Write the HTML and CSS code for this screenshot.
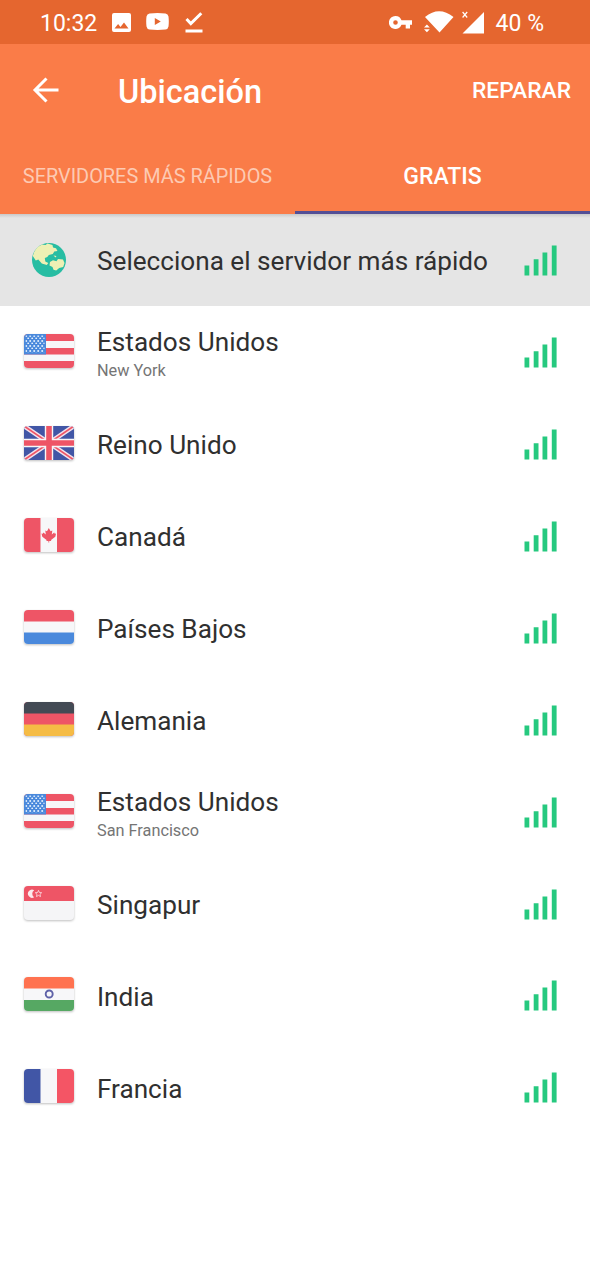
FILE: index.html
```html
<!DOCTYPE html>
<html lang="es">
<head>
<meta charset="utf-8">
<title>Ubicación</title>
<link rel="stylesheet" href="styles.css">
</head>
<body>
<svg class="defs" width="0" height="0" aria-hidden="true">
  <defs>
    <clipPath id="flag-clip"><rect width="50" height="34" rx="4"/></clipPath>
    <pattern id="stars" width="4" height="5" patternUnits="userSpaceOnUse">
      <circle cx="2.2" cy="2" r="1" fill="#e3effc"/><circle cx="0.2" cy="4.5" r=".9" fill="#e3effc"/><circle cx="4.2" cy="4.5" r=".9" fill="#e3effc"/>
    </pattern>
    <symbol id="bars" viewBox="0 0 33 31">
      <path fill="#26c97f" d="M.5 20.500h4.800v10H.5zM9.700 14.300h4.800v16.200H9.700zM18.500 7.500h4.800v23h-4.800zM27.800.5h4.800v30h-4.800z"/>
    </symbol>
    <symbol id="us" viewBox="0 0 50 34"><g clip-path="url(#flag-clip)">
      <path fill="#f7f7f9" d="M0 0h50v34H0z"/><path fill="#ee5566" d="M0 0h50v7H0zM0 14h50v6.500H0zM0 27h50v7H0z"/>
      <path fill="#4a89dc" d="M0 0h22v20.500H0z"/><path fill="url(#stars)" d="M1.500 1.500h19v17h-19z"/>
    </g></symbol>
    <symbol id="gb" viewBox="0 0 50 34"><g clip-path="url(#flag-clip)">
      <path fill="#4156a6" d="M0 0h50v34H0z"/>
      <path stroke="#f3e0ea" stroke-width="4.600" d="M0 0l50 34M50 0L0 34"/>
      <path stroke="#ee5566" stroke-width="1.700" d="M0 0l50 34M50 0L0 34"/>
      <path stroke="#f7f7f9" stroke-width="8.400" d="M25 0v34M0 17h50"/>
      <path stroke="#ee5566" stroke-width="5.600" d="M25 0v34M0 17h50"/>
    </g></symbol>
    <symbol id="ca" viewBox="0 0 50 34"><g clip-path="url(#flag-clip)">
      <path fill="#f7f7f9" d="M0 0h50v34H0z"/><path fill="#ee5566" d="M0 0h16.500v34H0zM33 0h17v34H33z"/>
      <path fill="#ee5566" d="M24.800 10l1.800 3.200 1.700-.8-.5 4 2.400-1.800.6 1.200 1.300-.2-.8 3.200-4.300 3.200.2 1h-2v1.500h-.8V23h-2l.2-1-4.300-3.200-.8-3.200 1.300.2.600-1.200 2.400 1.800-.5-4 1.700.8z"/>
    </g></symbol>
    <symbol id="nl" viewBox="0 0 50 34"><g clip-path="url(#flag-clip)">
      <path fill="#f7f7f9" d="M0 0h50v34H0z"/><path fill="#ee5566" d="M0 0h50v11.500H0z"/><path fill="#4a89dc" d="M0 22.500h50V34H0z"/>
    </g></symbol>
    <symbol id="de" viewBox="0 0 50 34"><g clip-path="url(#flag-clip)">
      <path fill="#ee5566" d="M0 0h50v34H0z"/><path fill="#434a54" d="M0 0h50v11.500H0z"/><path fill="#f5bc45" d="M0 22.500h50V34H0z"/>
    </g></symbol>
    <symbol id="sg" viewBox="0 0 50 34"><g clip-path="url(#flag-clip)">
      <path fill="#f5f5f7" d="M0 0h50v34H0z"/><path fill="#ee5566" d="M0 0h50v15H0z"/>
      <path fill="#fbeaed" d="M10.200 4.200A4.100 4.100 0 1 0 10.200 11.200 4.100 4.100 0 0 1 10.200 4.200z"/>
      <path fill="none" stroke="#f9d5db" stroke-width=".9" d="M14.500 4.400l.9 2.100 2.300.2-1.700 1.600.5 2.300-2-1.200-2 1.200.5-2.300-1.700-1.600 2.300-.2z"/>
    </g></symbol>
    <symbol id="in" viewBox="0 0 50 34"><g clip-path="url(#flag-clip)">
      <path fill="#f7f7f9" d="M0 0h50v34H0z"/><path fill="#ff7250" d="M0 0h50v11.500H0z"/><path fill="#56a863" d="M0 23h50v11H0z"/>
      <circle cx="25.200" cy="17" r="3.500" fill="none" stroke="#5f62a8" stroke-width="1.900"/>
    </g></symbol>
    <symbol id="fr" viewBox="0 0 50 34"><g clip-path="url(#flag-clip)">
      <path fill="#f7f7f9" d="M0 0h50v34H0z"/><path fill="#4156a6" d="M0 0h16.500v34H0z"/><path fill="#f45565" d="M33 0h17v34H33z"/>
    </g></symbol>
  </defs>
</svg>

<header class="header">
  <div class="status">
    <span class="time">10:32</span>
    <svg class="ic-image" viewBox="0 0 19 19" width="19" height="19"><path fill="#fff" fill-rule="evenodd" d="M2 0h15a2 2 0 0 1 2 2v15a2 2 0 0 1-2 2H2a2 2 0 0 1-2-2V2a2 2 0 0 1 2-2zM2.500 15.500h14l-4.500-6-3.500 4.400-2.400-2.800z"/></svg>
    <svg class="ic-video" viewBox="0 0 23 17" width="23" height="17"><path fill="#fff" fill-rule="evenodd" d="M3.500.4Q11.500-.4 19.500.4 22 .6 22.500 3.500q.6 5 0 10-.5 2.700-3 3-8 .8-16 0-2.500-.3-3-3-.6-5 0-10Q1 .6 3.500.4zM8.800 5v7l6-3.500z"/></svg>
    <svg class="ic-check" viewBox="0 0 18 21" width="18" height="21"><path fill="none" stroke="#fff" stroke-width="3" d="M1.500 7l4.300 4.500L16.300 1.200M.5 19h17"/></svg>
    <div class="status-right">
      <svg class="ic-key" viewBox="0 0 23 13" width="23" height="13"><path fill="#fff" fill-rule="evenodd" d="M6.500 0a6.500 6.500 0 0 1 6 4.300H23v4.400h-2V12.500h-4.300V8.700h-4.200A6.500 6.500 0 1 1 6.500 0zm0 4.200a2.300 2.300 0 1 0 0 4.600 2.300 2.300 0 0 0 0-4.600z"/></svg>
      <svg class="ic-wifi" viewBox="0 0 30 22" width="30" height="22"><path fill="#fff" d="M1 6Q15-5.500 29.500 6L15.500 21.500zM0 16.500l2.900-3 2.900 3zM0 18.300h5.800l-2.900 3z"/></svg>
      <svg class="ic-cell" viewBox="0 0 23 24" width="23" height="24"><path fill="#fff" d="M22 2v21.500H.5z"/><path stroke="#fff" stroke-width="1.200" d="M.6 2L5.200 7.500M5.200 2L.6 7.500"/></svg>
      <span class="battery">40 %</span>
    </div>
  </div>
  <div class="toolbar">
    <svg class="back" viewBox="0 0 27 26" width="27" height="26"><path fill="none" stroke="#fff" stroke-width="3" d="M26.500 13H3M14.500 1.500L3 13l11.500 11.500"/></svg>
    <h1 class="title">Ubicación</h1>
    <span class="action">REPARAR</span>
  </div>
  <nav class="tabs">
    <div class="tab"><span class="tab-fast">SERVIDORES MÁS RÁPIDOS</span></div>
    <div class="tab tab-active"><span>GRATIS</span></div>
  </nav>
</header>

<main class="list">
  <div class="row row-selected">
    <span class="icon"><svg class="globe" viewBox="0 0 34 34"><circle cx="17" cy="17" r="17" fill="#27bda3"/><path fill="#eef0b4" d="M.8 13Q2.500 5 10 1.500l3.500.5 2-1.500 5 1.500.5 2.500 3 .8 1.500 2.700-3.200.4-1.500 2.500-4 1-1.500 2-2.500 1 .5 3.500 3 1.500-1.500 2-5-1.500-3.500-4-2.500 1zM18 19l3-1.700 3.500 1 1.500-2.300 5 .5 1.500 3.500-1.300 4-4 1-3 2.500-2.700-.8-1-2.700-3-1.500zM21.500 12.500l3 .5-1 1.500z"/></svg></span>
    <div class="label"><span class="name">Selecciona el servidor más rápido</span></div>
    <svg class="bars"><use href="#bars"/></svg>
  </div>
  <div class="row">
    <span class="icon"><svg class="flag"><use href="#us"/></svg></span>
    <div class="label"><span class="name">Estados Unidos</span><span class="city">New York</span></div>
    <svg class="bars"><use href="#bars"/></svg>
  </div>
  <div class="row">
    <span class="icon"><svg class="flag"><use href="#gb"/></svg></span>
    <div class="label"><span class="name">Reino Unido</span></div>
    <svg class="bars"><use href="#bars"/></svg>
  </div>
  <div class="row">
    <span class="icon"><svg class="flag"><use href="#ca"/></svg></span>
    <div class="label"><span class="name">Canadá</span></div>
    <svg class="bars"><use href="#bars"/></svg>
  </div>
  <div class="row">
    <span class="icon"><svg class="flag"><use href="#nl"/></svg></span>
    <div class="label"><span class="name">Países Bajos</span></div>
    <svg class="bars"><use href="#bars"/></svg>
  </div>
  <div class="row">
    <span class="icon"><svg class="flag"><use href="#de"/></svg></span>
    <div class="label"><span class="name">Alemania</span></div>
    <svg class="bars"><use href="#bars"/></svg>
  </div>
  <div class="row">
    <span class="icon"><svg class="flag"><use href="#us"/></svg></span>
    <div class="label"><span class="name">Estados Unidos</span><span class="city">San Francisco</span></div>
    <svg class="bars"><use href="#bars"/></svg>
  </div>
  <div class="row">
    <span class="icon"><svg class="flag"><use href="#sg"/></svg></span>
    <div class="label"><span class="name">Singapur</span></div>
    <svg class="bars"><use href="#bars"/></svg>
  </div>
  <div class="row">
    <span class="icon"><svg class="flag"><use href="#in"/></svg></span>
    <div class="label"><span class="name">India</span></div>
    <svg class="bars"><use href="#bars"/></svg>
  </div>
  <div class="row">
    <span class="icon"><svg class="flag"><use href="#fr"/></svg></span>
    <div class="label"><span class="name">Francia</span></div>
    <svg class="bars"><use href="#bars"/></svg>
  </div>
</main>
</body>
</html>
```

FILE: styles.css
```css
* { box-sizing: border-box; }
body { margin: 0; background: #fff; font-family: Roboto, sans-serif; color: #303030; }
svg { display: block; flex: none; }
.defs { position: absolute; }
.header { height: 214px; background: #fa7c48; color: #fff; }
.status { display: flex; align-items: flex-start; height: 44px; background: #e5662f; padding: 0 46px 0 40px; }
.time, .battery { font-size: 23px; line-height: 47px; white-space: nowrap; }
.time { width: 72px; }
.ic-image { margin-top: 13px; }
.ic-video { margin: 13px 0 0 15px; }
.ic-check { margin: 12px 0 0 16px; }
.status-right { display: flex; align-items: flex-start; margin-left: auto; }
.ic-key { margin: 16px 12px 0 0; }
.ic-wifi { margin: 11px 8px 0 0; }
.ic-cell { margin: 10px 11px 0 0; }
.toolbar { display: flex; align-items: center; height: 94px; padding: 0 19px 0 32px; }
.back { margin-top: -2px; }
.title { margin: 2px 0 0 59px; font-size: 32.5px; line-height: 40px; font-weight: 500; }
.action { margin-left: auto; font-size: 22.8px; line-height: 28px; font-weight: 500; }
.tabs { display: grid; grid-template-columns: 1fr 1fr; height: 76px; }
.tab { display: flex; align-items: center; justify-content: center; padding-top: 5px; font-size: 23px; line-height: 28px; font-weight: 500; border-bottom: 3px solid transparent; }
.tab-fast { font-size: 19.9px; font-weight: 400; color: #fdcab3; white-space: nowrap; }
.tab-active { border-bottom-color: #534f96; }
.row { display: flex; align-items: center; height: 91.95px; padding: 0 33px 0 24px; }
.row-selected { background: linear-gradient(#c9c9c9, #e5e5e5 4px); }
.icon { display: flex; justify-content: center; width: 50px; margin-right: 23px; }
.flag { width: 50px; height: 34px; margin-top: -2px; filter: drop-shadow(0 1px 1px rgba(0, 0, 0, .25)); }
.globe { width: 34px; height: 34px; margin-top: 1px; }
.label { display: flex; flex-direction: column; flex: 1; }
.name { font-size: 26.15px; line-height: 32px; padding-top: 2.2px; white-space: nowrap; }
.city { margin: 2px 0 -2px; font-size: 16.3px; line-height: 22px; color: #757575; }
.bars { width: 33px; height: 31px; margin-top: 1px; }
```
